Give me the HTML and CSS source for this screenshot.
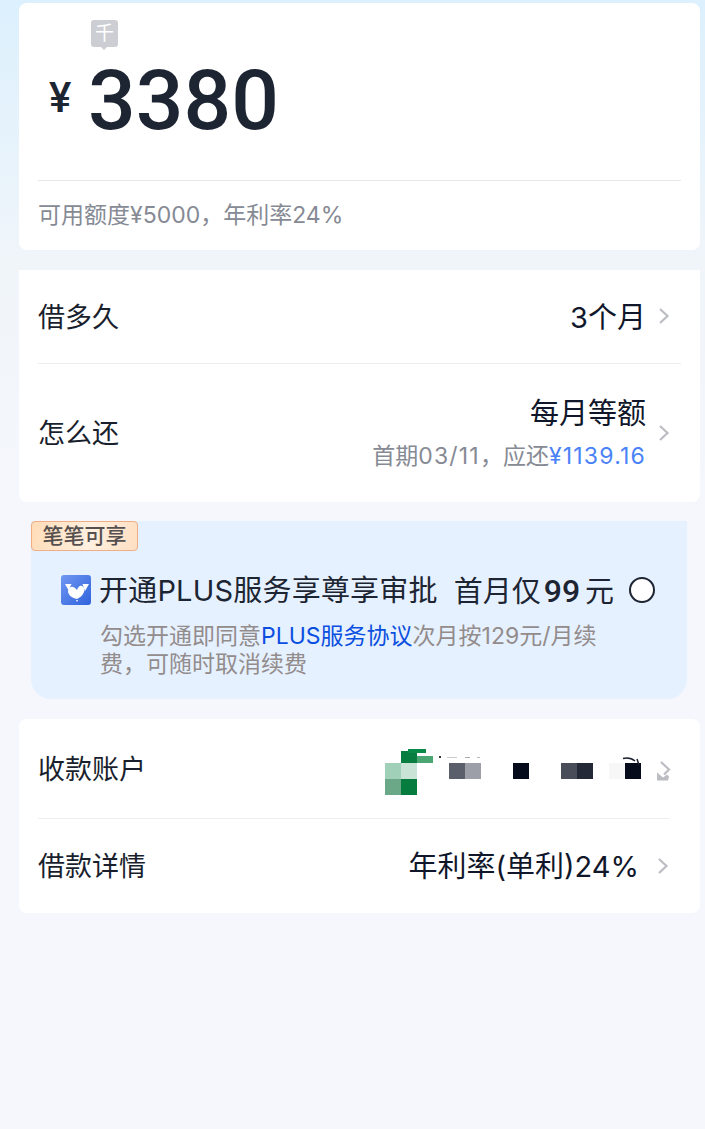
FILE: index.html
```html
<!DOCTYPE html>
<html lang="zh-CN">
<head>
    <meta charset="UTF-8">
    <meta name="viewport" content="width=device-width, initial-scale=1.0">
    <title>借款</title>
    <link rel="stylesheet" href="styles.css">
</head>
<body>

    <div class="page">
        <div class="card amount-card">
            <div class="unit-tip">千</div>
            <div class="amount"><span class="currency">¥</span><span class="number">3380</span></div>
            <div class="quota">可用额度¥5000，年利率24%</div>
        </div>

        <div class="card plan-card">
            <div class="row row-term">
                <div class="row-label">借多久</div>
                <div class="row-value">3个月</div>
                <svg class="chevron" viewBox="0 0 12 18"><path d="M2 2l7.500 7-7.500 7"/></svg>
            </div>
            <div class="row row-repay">
                <div class="row-label">怎么还</div>
                <div class="row-value">
                    <div class="row-main">每月等额</div>
                    <div class="row-sub">首期<span class="spaced">03/11</span>，应还<span class="due spaced">¥1139.16</span></div>
                </div>
                <svg class="chevron" viewBox="0 0 12 18"><path d="M2 2l7.500 7-7.500 7"/></svg>
            </div>
        </div>

        <div class="plus-card">
            <div class="plus-tag">笔笔可享</div>
            <div class="plus-head">
                <svg class="plus-logo" viewBox="0 0 30 30">
                    <defs>
                        <linearGradient id="logoBg" x1="0" y1="0" x2="1" y2="1">
                            <stop offset="0" stop-color="#7097f2"/>
                            <stop offset="1" stop-color="#2f62dc"/>
                        </linearGradient>
                    </defs>
                    <rect width="30" height="30" rx="3" fill="url(#logoBg)"/>
                    <path d="M4 9h6.500l-3 6zM21.500 9h6.500l-4 7z" fill="#fff"/>
                    <path d="M16 24c-5-1-9-4-9-8 0-3 3-5 5-4 2 .5 3 2 4 3 1-3 3-5 5-4 3 1 3 5 1 8-1 2-4 4-6 5z" fill="#fff"/>
                    <path d="M15 25h2l-1 2z" fill="#fff"/>
                </svg>
                <div class="plus-title">开通PLUS服务享尊享审批</div>
                <div class="plus-price">首月仅<b>99</b>元</div>
                <div class="radio"></div>
            </div>
            <div class="plus-desc">勾选开通即同意<span class="link">PLUS服务协议</span>次月按129元/月续费，可随时取消续费</div>
        </div>

        <div class="card account-card">
            <div class="row row-account">
                <div class="row-label">收款账户</div>
                <svg class="mosaic" viewBox="0 0 256 48">
                    <rect x="16" y="4" width="16" height="12" fill="#087d40"/>
                    <rect x="23" y="2" width="18" height="4" fill="#0a8a48"/>
                    <rect x="32" y="9" width="16" height="7" fill="#4aa673"/>
                    <rect x="0" y="16" width="16" height="16" fill="#a1d0b8"/>
                    <rect x="16" y="16" width="16" height="16" fill="#c9e3d6"/>
                    <rect x="0" y="32" width="16" height="16" fill="#6aa888"/>
                    <rect x="16" y="32" width="16" height="16" fill="#067c3e"/>
                    <rect x="64" y="16" width="16" height="16" fill="#5b5f6b"/>
                    <rect x="80" y="16" width="16" height="16" fill="#9c9fa8"/>
                    <rect x="128" y="16" width="16" height="16" fill="#050b1a"/>
                    <rect x="176" y="16" width="16" height="16" fill="#494c59"/>
                    <rect x="192" y="16" width="16" height="16" fill="#232936"/>
                    <rect x="224" y="16" width="16" height="16" fill="#f7f7f8"/>
                    <rect x="240" y="16" width="16" height="16" fill="#050b1a"/>
                    <path d="M238 11.500c5-1 9 0 12 2.500M252 12l2 6" fill="none" stroke="#1b2030" stroke-width="1.500"/>
                    <rect x="54" y="9" width="2" height="2" fill="#333"/>
                    <rect x="62" y="10" width="10" height="1" fill="#ccc"/>
                    <rect x="80" y="10" width="5" height="1" fill="#aaa"/>
                    <rect x="92" y="10" width="3" height="1" fill="#bbb"/>
                </svg>
                <svg class="chevron chevron-account" viewBox="0 0 14 20">
                    <path d="M4 1l8 7.500-5 5"/>
                    <path class="chevron-fill" d="M0 11.500l6 5 4-3 2 2-1 4h-11z"/>
                </svg>
            </div>
            <div class="row row-detail">
                <div class="row-label">借款详情</div>
                <div class="row-value row-value-gap">年利率(单利)24%</div>
                <svg class="chevron" viewBox="0 0 12 18"><path d="M2 2l7.500 7-7.500 7"/></svg>
            </div>
        </div>
    </div>

</body>
</html>
```

FILE: styles.css
```css
* {
    box-sizing: border-box;
}
html, body {
    margin: 0;
    height: 100%;
}
body {
    font-family: "Inter", "Noto Sans CJK SC", sans-serif;
    color: #1a1f2e;
    background: linear-gradient(180deg, #dcf0fd 0, #f0f5fa 260px, #f5f7fc 520px);
}
.page {
    padding: 3px 5px 0 19px;
}
.card {
    background: #fff;
    border-radius: 8px;
}

.amount-card {
    height: 247px;
    padding: 17px 19px 0;
}
.unit-tip {
    position: relative;
    width: 27px;
    height: 27px;
    margin-left: 53px;
    background: #cdced3;
    border-radius: 3px;
    color: #fff;
    font-size: 19px;
    line-height: 27px;
    text-align: center;
}
.unit-tip::after {
    content: "";
    position: absolute;
    left: 9px;
    bottom: -3px;
    border: 4px solid transparent;
    border-top-color: #cdced3;
    border-bottom: 0;
}
.amount {
    display: flex;
    align-items: center;
    height: 80px;
    margin-top: 14px;
    padding-left: 11px;
    color: #1d2533;
}
.currency {
    width: 39px;
    margin-top: -7px;
    font-family: "Roboto", sans-serif;
    font-size: 42px;
    font-weight: 500;
}
.number {
    font-family: "Roboto", sans-serif;
    font-size: 84px;
    font-weight: 500;
    line-height: 80px;
}
.quota {
    margin-top: 39px;
    padding-top: 20px;
    border-top: 1px solid #e6e7ea;
    color: #868a94;
    font-size: 23px;
    line-height: 28px;
}

.plan-card {
    margin-top: 20px;
    border-radius: 0 0 8px 8px;
}
.row {
    display: flex;
    align-items: center;
    margin: 0 19px;
    padding-right: 11px;
}
.row-label {
    flex: 1;
    margin-top: -3px;
    font-size: 27px;
}
.row-value {
    font-size: 29px;
    text-align: right;
    color: #10172a;
}
.row-term .row-value, .row-detail .row-value {
    margin-top: -4px;
}
.row-value-gap {
    margin-right: 6px;
}
.row-main {
    line-height: 36px;
}
.row-sub {
    margin-top: 9px;
    color: #868a94;
    font-size: 23px;
    line-height: 30px;
}
.spaced {
    letter-spacing: 1.200px;
}
.due {
    color: #4a82f7;
}
.chevron {
    width: 12px;
    height: 18px;
    flex: none;
    margin-left: 12px;
    fill: none;
    stroke: #bcbdc2;
    stroke-width: 2.200;
}
.row-term {
    height: 94px;
    border-bottom: 1px solid #eceef0;
}
.row-term .chevron {
    margin-top: -2px;
}
.row-repay {
    height: 138px;
}

.plus-card {
    position: relative;
    margin: 19px 13px 0 12px;
    height: 178px;
    padding: 52px 26px 0 30px;
    background: #e6f1ff;
    border-radius: 0 0 20px 20px;
}
.plus-tag {
    position: absolute;
    left: 0;
    top: 0;
    width: 107px;
    height: 30px;
    background: linear-gradient(100deg, #ffdcb8, #fff0e0 55%, #ffdfc2);
    border: 1px solid #efae84;
    border-radius: 4px;
    color: #55504f;
    font-size: 21px;
    font-weight: 500;
    line-height: 28px;
    text-align: center;
}
.plus-head {
    display: flex;
    align-items: center;
    height: 34px;
}
.plus-logo {
    width: 30px;
    height: 30px;
    flex: none;
    margin-right: 8px;
}
.plus-title, .plus-price {
    margin-top: 2px;
    font-size: 29px;
    line-height: 34px;
    color: #1d2533;
}
.plus-title {
    letter-spacing: .200px;
}
.plus-price {
    margin-left: 16px;
}
.plus-price b {
    margin: 0 5px 0 3px;
    font-family: "Roboto", sans-serif;
    font-size: 32px;
    font-weight: 500;
}
.radio {
    width: 26px;
    height: 26px;
    margin-left: 15px;
    background: #fff;
    border: 2px solid #1d2533;
    border-radius: 50%;
}
.plus-desc {
    width: 510px;
    margin: 15px 0 0 39px;
    color: #938c8c;
    font-size: 23px;
    line-height: 28px;
}
.link {
    color: #0b4fe0;
}

.account-card {
    margin-top: 20px;
    height: 194px;
}
.account-card .row {
    margin-right: 31px;
    padding-right: 0;
}
.row-account {
    height: 100px;
    border-bottom: 1px solid #eceef0;
}
.mosaic {
    width: 256px;
    height: 48px;
    flex: none;
    margin-top: 4px;
}
.chevron-account {
    width: 14px;
    height: 20px;
    margin-left: 16px;
    margin-right: -2px;
    margin-top: 4px;
}
.chevron-fill {
    fill: #bcbdc2;
    stroke: none;
}
.row-detail {
    height: 94px;
}
```
